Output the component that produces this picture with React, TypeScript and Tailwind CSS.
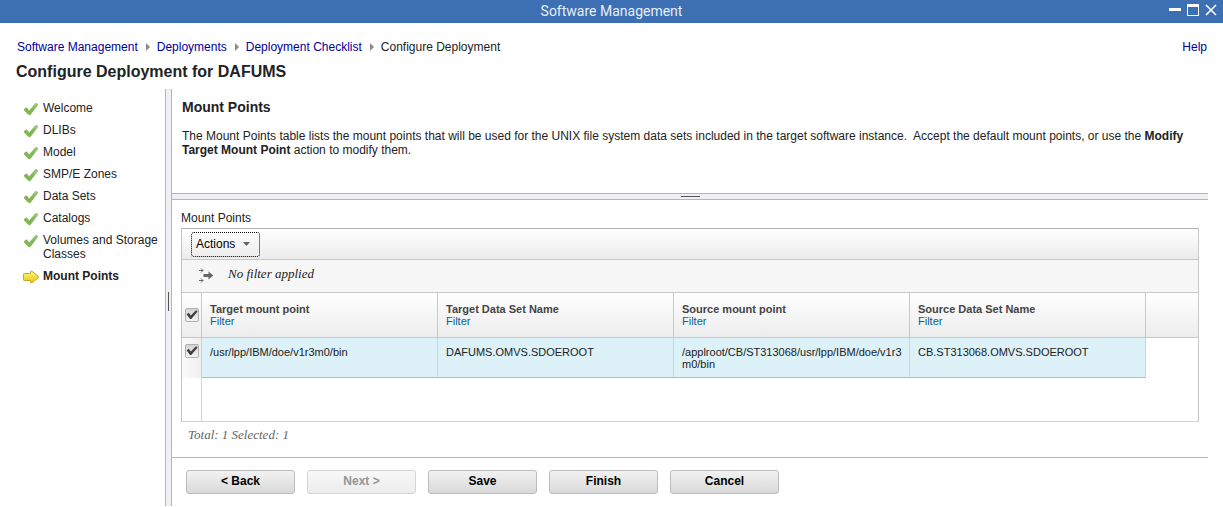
import { Fragment, useState } from "react";

const steps = [
  "Welcome",
  "DLIBs",
  "Model",
  "SMP/E Zones",
  "Data Sets",
  "Catalogs",
  "Volumes and Storage Classes",
];

const crumbs = ["Software Management", "Deployments", "Deployment Checklist"];

const columns = [
  "Target mount point",
  "Target Data Set Name",
  "Source mount point",
  "Source Data Set Name",
];

const row = [
  "/usr/lpp/IBM/doe/v1r3m0/bin",
  "DAFUMS.OMVS.SDOEROOT",
  "/applroot/CB/ST313068/usr/lpp/IBM/doe/v1r3m0/bin",
  "CB.ST313068.OMVS.SDOEROOT",
];

function CheckIcon() {
  return (
    <svg className="h-4 w-4 shrink-0" viewBox="0 0 16 16" aria-hidden="true">
      <defs>
        <linearGradient id="tick" x1="0" y1="1" x2="1" y2="0">
          <stop offset="0" stopColor="#86b84f" />
          <stop offset="0.5" stopColor="#80b558" />
          <stop offset="1" stopColor="#a3d08a" />
        </linearGradient>
      </defs>
      <path
        d="M1.2 8 L2.4 6.9 Q3.6 6.2 4.5 7.2 L6.2 9.6 L12 2.4 Q12.6 1.7 13.5 2.1 L14.8 2.7 Q15.6 3.3 15 4.2 L7.8 13.4 Q6.4 14.9 5 13.4 L1.1 9.4 Q.5 8.6 1.2 8Z"
        fill="url(#tick)"
      />
    </svg>
  );
}

function ArrowIcon() {
  return (
    <svg className="h-4 w-4 shrink-0" viewBox="0 0 16 16" aria-hidden="true">
      <defs>
        <linearGradient id="arrow" x1="0" y1="0" x2="0" y2="1">
          <stop offset="0" stopColor="#fff68a" />
          <stop offset="1" stopColor="#e6c800" />
        </linearGradient>
      </defs>
      <path
        d="M1.3 4.5 Q.5 4.5 .5 5.3 V10.7 Q.5 11.5 1.3 11.5 H7.5 V13.4 Q7.9 14.4 8.9 13.8 L15 8.9 Q15.9 8 15 7.1 L8.9 2.2 Q7.9 1.6 7.5 2.6 V4.5Z"
        fill="url(#arrow)"
        stroke="#c4a628"
      />
    </svg>
  );
}

function FilterIcon() {
  return (
    <svg className="h-4 w-4 shrink-0" viewBox="0 0 16 16" fill="none" aria-hidden="true">
      <path d="M1 2.5H5M3 .5L5 2.5L3 4.5M1 12.5H5M3 10.5L5 12.5L3 14.5" stroke="#666" />
      <path d="M5.5 6H10.5V3.5L15.3 7.5L10.5 11.5V9H5.5Z" fill="#666" />
    </svg>
  );
}

function Tick({ label }: { label: string }) {
  const [on, setOn] = useState(true);
  return (
    <span className="mx-auto grid h-3.5 w-3.5">
      <input
        type="checkbox"
        aria-label={label}
        checked={on}
        onChange={() => setOn(!on)}
        className="peer col-start-1 row-start-1 h-3.5 w-3.5 appearance-none rounded-[2px] border border-[#b0b0b0] bg-linear-to-b from-[#d4d4d4] to-[#f4f4f4]"
      />
      <svg
        className="pointer-events-none invisible col-start-1 row-start-1 h-3.5 w-3.5 peer-checked:visible"
        viewBox="0 0 14 14"
        aria-hidden="true"
      >
        <path d="M1.6 6.2L3.8 4.8L5.8 7.4L11 2.2L12.6 3.6L6.3 11H5Z" fill="#404040" />
      </svg>
    </span>
  );
}

function Wizard({ label, disabled = false }: { label: string; disabled?: boolean }) {
  return (
    <button
      type="button"
      disabled={disabled}
      className="h-6 w-[109px] rounded-[3px] border border-[#bcbcbc] bg-linear-to-b from-[#f2f2f2] to-[#d9d9d9] pb-0.5 text-xs font-bold text-black disabled:border-[#d4d4d4] disabled:from-[#f8f8f8] disabled:to-[#ececec] disabled:text-[#949494]"
    >
      {label}
    </button>
  );
}

export default function App() {
  return (
    <div className="bg-white font-['Liberation_Sans',Arial,sans-serif] text-xs leading-[14px] text-[#222]">
      <header className="grid h-[23px] grid-cols-[1fr_auto_1fr] items-center bg-[#3d70b2] text-white">
        <span />
        <span className="pb-0.5 font-['Roboto',sans-serif] text-sm leading-5 text-[#e6eefa]">
          Software Management
        </span>
        <div className="flex justify-end gap-1.5 pr-1.5 pb-1">
          <button type="button" aria-label="Minimize">
            <svg className="h-3 w-3" viewBox="0 0 12 12">
              <path d="M0 4H12V7H0Z" fill="#fff" />
            </svg>
          </button>
          <button type="button" aria-label="Maximize">
            <svg className="h-3 w-3" viewBox="0 0 12 12">
              <path d="M0 0H12V12H0ZM1 3V11H11V3Z" fill="#fff" fillRule="evenodd" />
            </svg>
          </button>
          <button type="button" aria-label="Close">
            <svg className="h-3 w-3" viewBox="0 0 12 12" fill="none">
              <path d="M1 1L11 11M11 1L1 11" stroke="#fff" strokeWidth="1.6" />
            </svg>
          </button>
        </div>
      </header>

      <div className="flex items-center justify-between pt-[17px] pr-4 pl-[17px]">
        <nav aria-label="Breadcrumb" className="flex items-center">
          {crumbs.map((c) => (
            <Fragment key={c}>
              <a href="#" className="text-[#00009c]">
                {c}
              </a>
              <svg className="mx-2 h-2 w-[3px]" viewBox="0 0 3 8" aria-hidden="true" overflow="visible">
                <path d="M0 0L4 4L0 8Z" fill="#8a8a8a" />
              </svg>
            </Fragment>
          ))}
          <span>Configure Deployment</span>
        </nav>
        <a href="#" className="text-[#00009c]">
          Help
        </a>
      </div>
      <h1 className="px-4 pt-2 pb-2 text-base leading-[19px] font-bold">
        Configure Deployment for DAFUMS
      </h1>

      <div className="flex">
        <aside className="w-[165px] shrink-0 pt-3 pl-[23px]">
          <ul className="flex flex-col gap-2">
            {steps.map((s) => (
              <li key={s} className="flex items-start gap-1">
                <span className="h-3.5">
                  <CheckIcon />
                </span>
                {s}
              </li>
            ))}
            <li className="flex items-start gap-1 font-bold" aria-current="step">
              <span className="h-3.5">
                <ArrowIcon />
              </span>
              Mount Points
            </li>
          </ul>
        </aside>

        <div className="flex w-[7px] shrink-0 items-center justify-center border-x border-[#b4b4ba] bg-[#f0f0f4]">
          <div className="mt-2 h-[19px] w-px bg-[#555]" />
        </div>

        <main className="mr-[15px] min-w-0 flex-1">
          <section className="h-[104px] pt-2.5 pr-4 pl-2.5">
            <h2 className="text-sm leading-4 font-bold">Mount Points</h2>
            <p className="mt-3.5">
              The Mount Points table lists the mount points that will be used for the UNIX file
              system data sets included in the target software instance.&nbsp; Accept the default
              mount points, or use the <b>Modify Target Mount Point</b> action to modify them.
            </p>
          </section>
          <div className="flex h-[7px] items-center justify-center border-y border-[#b4b4ba] bg-[#f0f0f4]">
            <div className="h-px w-[19px] bg-[#555]" />
          </div>

          <section className="border-b border-[#b3b8b8] pt-[11px] pr-[9px] pb-3.5 pl-[9px]">
            <h3>Mount Points</h3>
            <div className="mt-[3px] border border-t-[#b4b4b4] border-r-[#c8c8c8] border-b-[#d4d4d4] border-l-[#c4c4c4]">
              <div className="flex h-[31px] items-center border-b border-[#c8c8c8] bg-linear-to-b from-white to-[#ebebeb] pl-[9px]">
                <button
                  type="button"
                  className="flex h-[25px] w-[69px] items-center gap-2 rounded-[3px] border border-dotted border-black pl-1 text-black"
                >
                  Actions
                  <svg className="h-1 w-[7px]" viewBox="0 0 7 4" aria-hidden="true">
                    <path d="M0 0H7L3.5 4Z" fill="#666" />
                  </svg>
                </button>
              </div>
              <div className="flex h-[33px] items-center gap-3.5 border-b border-[#c8c8c8] bg-[#f6f6f6] pl-4">
                <FilterIcon />
                <span className="pb-1 font-['Liberation_Serif',serif] text-[13px] leading-4 italic">
                  No filter applied
                </span>
              </div>
              <table className="w-full table-fixed border-separate border-spacing-0 text-left text-[11px] leading-3">
                <colgroup>
                  <col className="w-5" />
                  <col className="w-[236px]" />
                  <col className="w-[236px]" />
                  <col className="w-[236px]" />
                  <col className="w-[236px]" />
                  <col />
                </colgroup>
                <thead>
                  <tr className="h-[45px] bg-linear-to-b from-white to-[#ececec]">
                    <th className="border-r border-b border-[#c8c8c8] p-0">
                      <Tick label="Select all" />
                    </th>
                    {columns.map((c) => (
                      <th
                        key={c}
                        className="border-r border-b border-[#c8c8c8] px-2 py-0 font-bold text-[#444]"
                      >
                        {c}
                        <a href="#" className="block font-normal text-[#00649d]">
                          Filter
                        </a>
                      </th>
                    ))}
                    <td className="border-b border-[#c8c8c8] p-0" />
                  </tr>
                </thead>
                <tbody>
                  <tr className="h-10 align-top">
                    <td className="border-r border-[#d0d0d0] bg-linear-to-r from-[#fafafa] to-[#efefef] px-0 pt-1.5 pb-0">
                      <Tick label="Select row" />
                    </td>
                    {row.map((c) => (
                      <td
                        key={c}
                        className="border-r border-b border-r-[#c8d4d8] border-b-[#b4bcc0] bg-[#dcf1f8] pt-2 pr-0.5 pb-0 pl-2 break-all"
                      >
                        {c}
                      </td>
                    ))}
                    <td />
                  </tr>
                  <tr className="h-[43px]">
                    <td className="border-r border-[#d4d4d4]" />
                    <td colSpan={5} />
                  </tr>
                </tbody>
              </table>
            </div>
            <p className="mt-[5px] pl-[7px] font-['Liberation_Serif',serif] text-[13px] leading-4 text-[#666] italic">
              Total: 1 Selected: 1
            </p>
          </section>

          <footer className="flex gap-3 pt-3 pb-3 pl-3.5">
            <Wizard label="< Back" />
            <Wizard label="Next >" disabled />
            <Wizard label="Save" />
            <Wizard label="Finish" />
            <Wizard label="Cancel" />
          </footer>
        </main>
      </div>
    </div>
  );
}
